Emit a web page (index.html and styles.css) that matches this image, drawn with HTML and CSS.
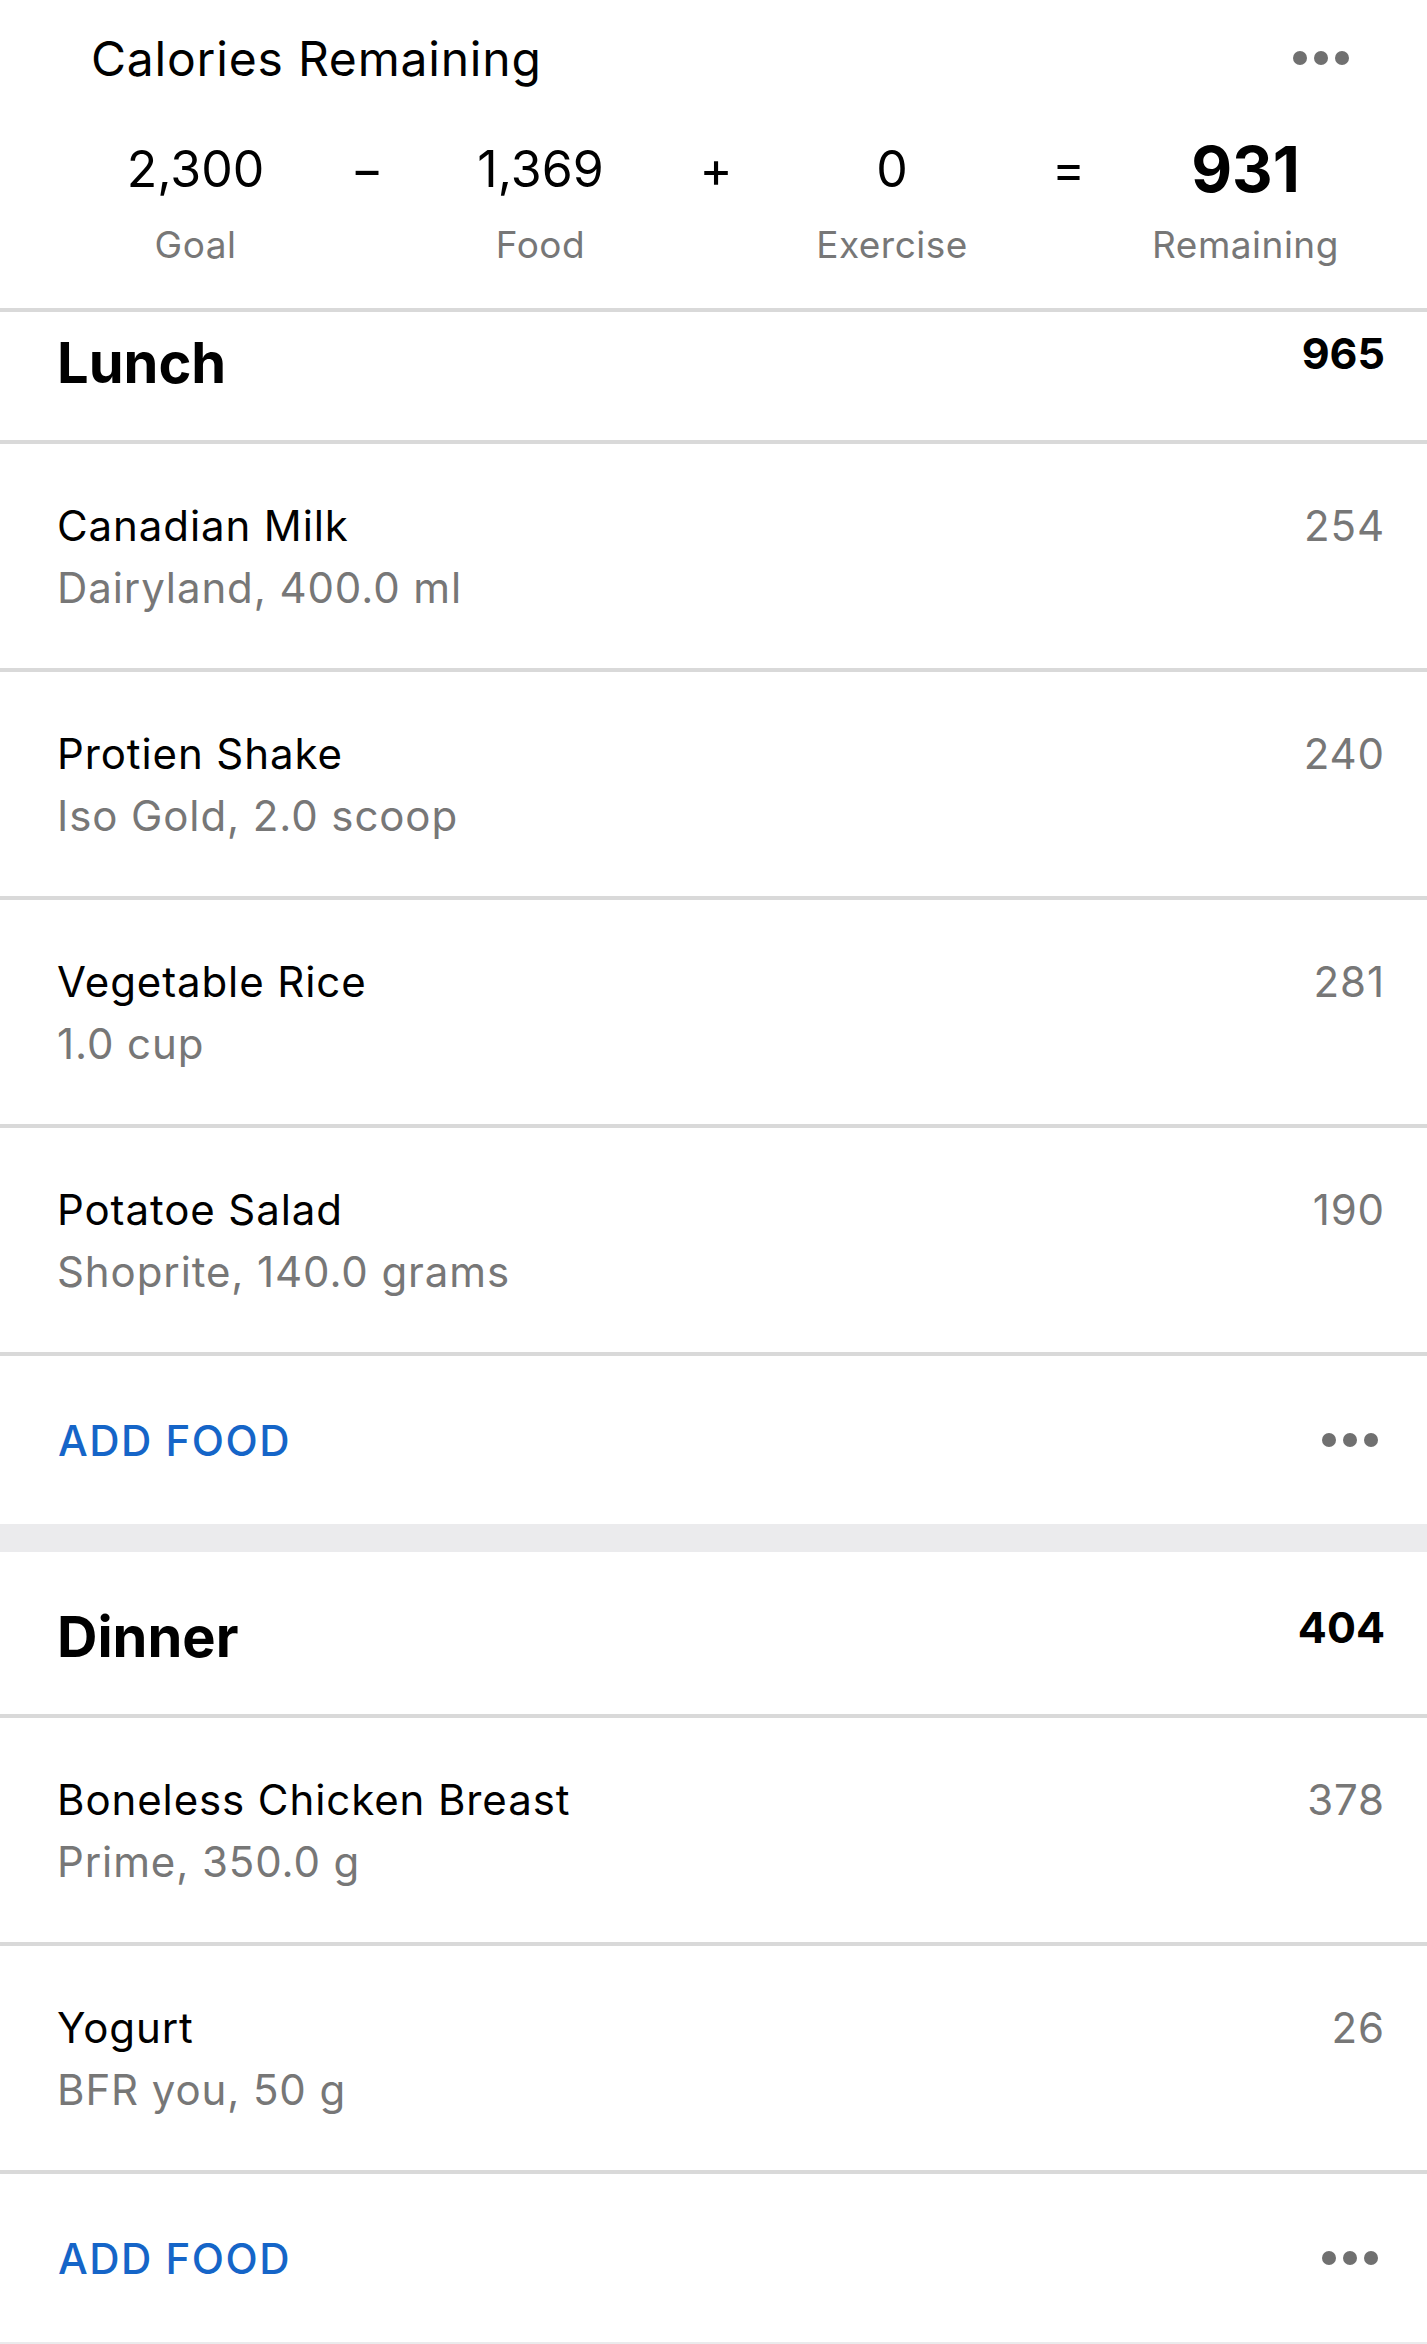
FILE: index.html
```html
<!DOCTYPE html>
<html lang="en">
<head>
<meta charset="utf-8">
<title>Diary</title>
<link rel="stylesheet" href="styles.css">
</head>
<body>
<div class="page">
  <section class="summary">
    <div class="summary-top">
      <h1 class="summary-title">Calories Remaining</h1>
      <svg class="dots dots-top" width="56" height="16" viewBox="0 0 56 16"><circle cx="7" cy="8" r="7"/><circle cx="28" cy="8" r="7"/><circle cx="49" cy="8" r="7"/></svg>
    </div>
    <div class="equation">
      <div class="val">2,300</div>
      <div class="op">−</div>
      <div class="val">1,369</div>
      <div class="op">+</div>
      <div class="val">0</div>
      <div class="op">=</div>
      <div class="val val-bold">931</div>
      <div class="lbl">Goal</div>
      <div></div>
      <div class="lbl">Food</div>
      <div></div>
      <div class="lbl">Exercise</div>
      <div></div>
      <div class="lbl">Remaining</div>
    </div>
  </section>

  <section class="meal">
    <div class="meal-head meal-head-cut">
      <h2 class="meal-name">Lunch</h2>
      <div class="meal-total">965</div>
    </div>
    <div class="item">
      <div class="item-text"><div class="item-name">Canadian Milk</div><div class="item-sub">Dairyland, 400.0 ml</div></div>
      <div class="item-cal">254</div>
    </div>
    <div class="item">
      <div class="item-text"><div class="item-name">Protien Shake</div><div class="item-sub">Iso Gold, 2.0 scoop</div></div>
      <div class="item-cal">240</div>
    </div>
    <div class="item">
      <div class="item-text"><div class="item-name">Vegetable Rice</div><div class="item-sub">1.0 cup</div></div>
      <div class="item-cal">281</div>
    </div>
    <div class="item">
      <div class="item-text"><div class="item-name">Potatoe Salad</div><div class="item-sub">Shoprite, 140.0 grams</div></div>
      <div class="item-cal">190</div>
    </div>
    <div class="add-row">
      <span class="add-food">ADD FOOD</span>
      <svg class="dots" width="56" height="16" viewBox="0 0 56 16"><circle cx="7" cy="8" r="7"/><circle cx="28" cy="8" r="7"/><circle cx="49" cy="8" r="7"/></svg>
    </div>
  </section>

  <div class="band"></div>

  <section class="meal">
    <div class="meal-head">
      <h2 class="meal-name">Dinner</h2>
      <div class="meal-total">404</div>
    </div>
    <div class="item">
      <div class="item-text"><div class="item-name">Boneless Chicken Breast</div><div class="item-sub">Prime, 350.0 g</div></div>
      <div class="item-cal">378</div>
    </div>
    <div class="item">
      <div class="item-text"><div class="item-name">Yogurt</div><div class="item-sub">BFR you, 50 g</div></div>
      <div class="item-cal">26</div>
    </div>
    <div class="add-row">
      <span class="add-food">ADD FOOD</span>
      <svg class="dots" width="56" height="16" viewBox="0 0 56 16"><circle cx="7" cy="8" r="7"/><circle cx="28" cy="8" r="7"/><circle cx="49" cy="8" r="7"/></svg>
    </div>
  </section>

  <div class="band"></div>
</div>
</body>
</html>
```

FILE: styles.css
```css
* { box-sizing: border-box; }

html, body {
  margin: 0;
  padding: 0;
  background: #ffffff;
}

body {
  font-family: Inter, "Noto Sans", "Liberation Sans", sans-serif;
  color: #000000;
}

.page {
  width: 1427px;
}

/* Summary */
.summary {
  padding: 30px 0 41px;
  border-bottom: 4px solid #d9d9d9;
}

.summary-top {
  display: flex;
  justify-content: space-between;
  align-items: center;
  padding: 0 78px 0 91px;
}

.summary-title {
  margin: 0;
  font-size: 48px;
  font-weight: 400;
  line-height: 58px;
  letter-spacing: 0.8px;
}

.dots {
  display: block;
  fill: #707070;
}

.dots-top {
  margin-top: -2px;
}

.equation {
  display: grid;
  grid-template-columns: 171px 172px 175px 176px 176px 177px 177px;
  grid-template-rows: 80px 44px;
  row-gap: 14px;
  padding-left: 110px;
  margin-top: 41px;
  text-align: center;
}

.equation > div {
  justify-self: center;
  white-space: nowrap;
}

.val {
  font-size: 50px;
  line-height: 80px;
  font-weight: 400;
}

.val-bold {
  font-size: 63px;
  font-weight: 700;
}

.op {
  font-size: 50px;
  line-height: 80px;
}

.lbl {
  font-size: 37px;
  line-height: 44px;
  letter-spacing: 0.5px;
  color: #777777;
}

/* Meal sections */
.meal-head {
  display: flex;
  justify-content: space-between;
  align-items: flex-start;
  padding: 49px 42px 45px 57px;
  border-bottom: 4px solid #d9d9d9;
  height: 166px;
}

.meal-head-cut {
  padding-top: 15px;
  height: 132px;
}

.meal-name {
  margin: 2px 0 0;
  font-size: 56px;
  line-height: 68px;
  font-weight: 700;
}

.meal-total {
  font-size: 43px;
  line-height: 52px;
  font-weight: 700;
}

.item {
  display: flex;
  justify-content: space-between;
  align-items: flex-start;
  height: 228px;
  padding: 51px 42px 0 57px;
  border-bottom: 4px solid #d9d9d9;
}

.item-name,
.item-sub,
.item-cal {
  font-size: 42px;
  line-height: 62px;
  letter-spacing: 0.9px;
}

.item-sub,
.item-cal {
  color: #777777;
}

.add-row {
  display: flex;
  justify-content: space-between;
  align-items: center;
  height: 168px;
  padding: 0 49px 0 58px;
}

.add-food {
  font-size: 42px;
  font-weight: 500;
  color: #1565c8;
  letter-spacing: 1.5px;
}

.band {
  height: 28px;
  background: #ebebed;
}
```
